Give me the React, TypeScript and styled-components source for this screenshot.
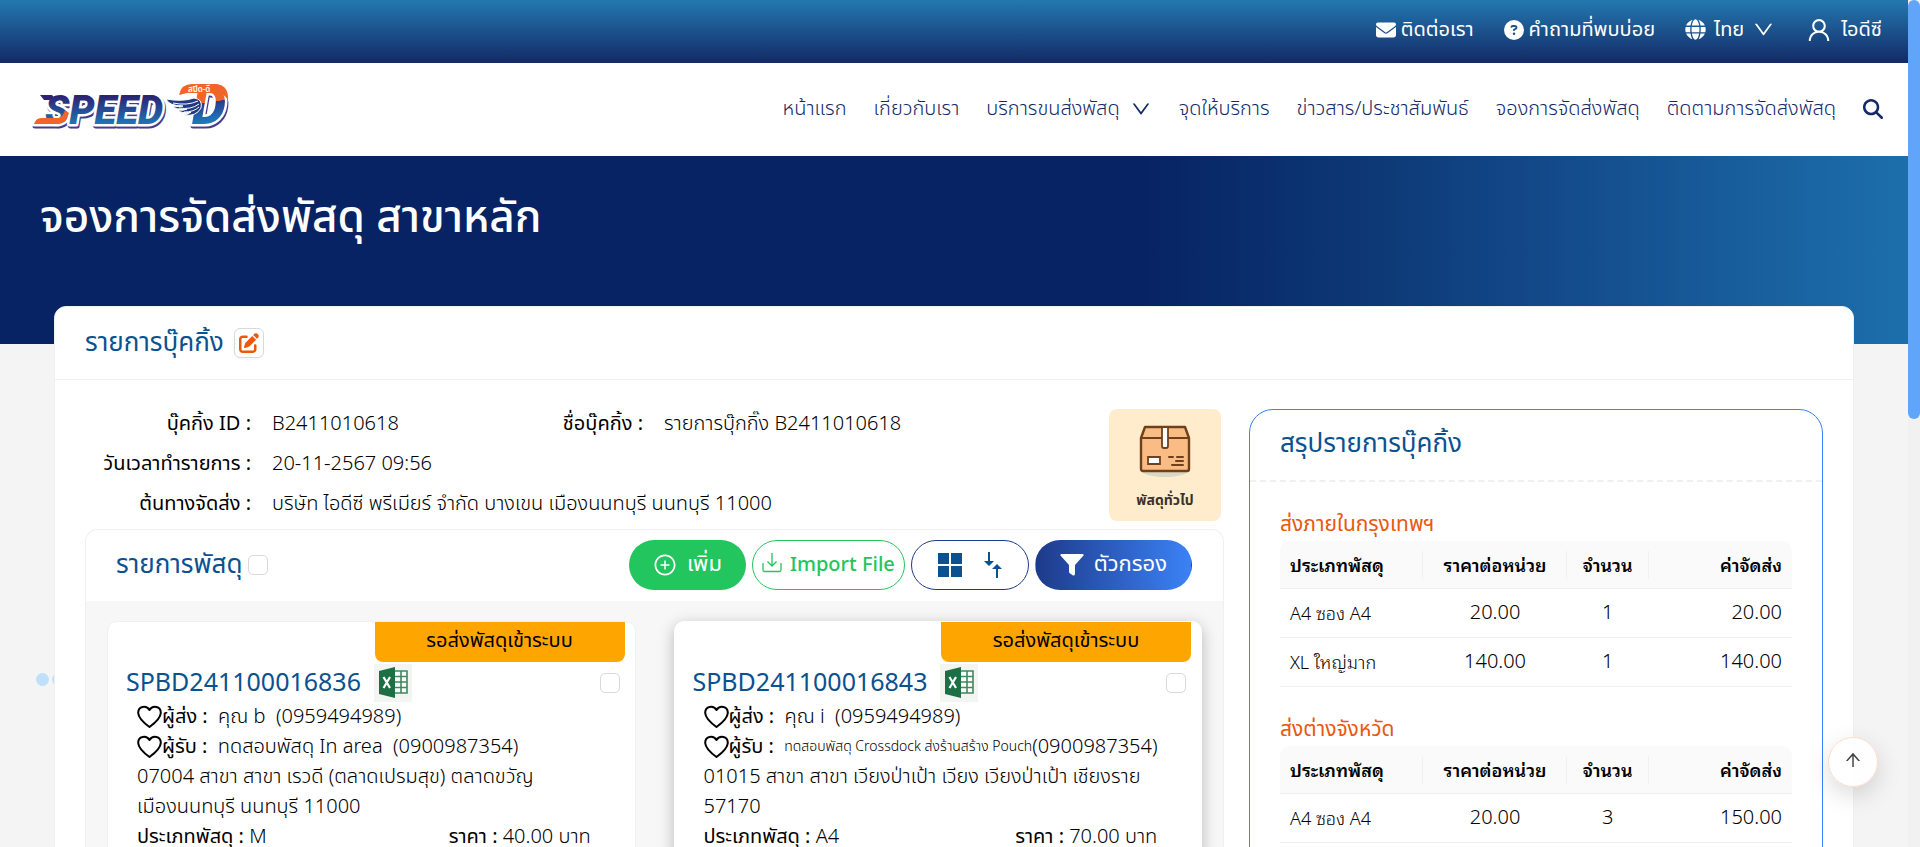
import React from "react";
import styled, { createGlobalStyle, css } from "styled-components";
import { FaEnvelope, FaCircleQuestion, FaMagnifyingGlass, FaPenToSquare } from "react-icons/fa6";
import { FaGlobe } from "react-icons/fa";
import { AiOutlineUser, AiOutlineDown, AiOutlinePlusCircle, AiOutlineArrowUp } from "react-icons/ai";

const thai = `"Noto Sans Thai", "Noto Sans", sans-serif`;
const looped = `"Noto Sans", "Noto Sans Thai Looped", sans-serif`;

const Global = createGlobalStyle`
  * { box-sizing: border-box; }
  body { margin: 0; background: #f4f4f4; color: #000; font: 300 20px/30px ${thai}; }
  h1, h2, h3, p, dl, dd, ul { margin: 0; padding: 0; }
  button { font: inherit; color: inherit; cursor: pointer; }
  a { color: inherit; text-decoration: none; }
  svg { display: block; flex: none; }
`;

const Shell = styled.div`
  display: grid;
  grid-template-columns: minmax(0, 1fr) 12px;
  height: 100vh;
  overflow: hidden;
`;
const Page = styled.div`
  min-width: 0;
`;
const ScrollTrack = styled.div`
  background: #f1f1f1;
  height: 100vh;
`;
const ScrollThumb = styled.div`
  height: 49.5%;
  border-radius: 6px;
  background: #60a5fa;
`;

const TopBar = styled.div`
  display: flex;
  justify-content: flex-end;
  align-items: center;
  gap: 30px;
  height: 63px;
  padding: 0 26px 4px;
  color: #fff;
  font-weight: 400;
  background: linear-gradient(#2478b0, #132a66);
`;
const TopLink = styled.a<{ $gap?: number }>`
  display: flex;
  align-items: center;
  gap: ${(p) => p.$gap ?? 5}px;
`;
const TopButton = styled.button`
  display: flex;
  align-items: center;
  gap: 8px;
  padding: 0;
  border: 0;
  background: none;
`;

const NavBar = styled.header`
  display: flex;
  align-items: center;
  justify-content: space-between;
  height: 93px;
  padding: 0 25px 2px 30px;
  background: #fff;
  color: #132a66;
`;
const Menu = styled.nav`
  display: flex;
  align-items: center;
  gap: 27px;
`;
const MenuLink = styled.a`
  display: flex;
  align-items: center;
  gap: 10px;
`;
const IconButton = styled.button`
  padding: 0;
  border: 0;
  background: none;
`;

const Banner = styled.section`
  height: 188px;
  padding: 30px 40px;
  color: #fff;
  background: linear-gradient(90deg, #072363 60%, #0d3976 72%, #13498a 81%, #1c6fab);
`;
const BannerTitle = styled.h1`
  font-size: 44px;
  line-height: 66px;
  font-weight: 500;
`;

const Main = styled.main`
  padding: 0 54px;
  margin-top: -38px;
`;
const Panel = styled.section`
  border: 1px solid #f0f0f0;
  border-radius: 12px;
  background: #fff;
`;
const PanelHead = styled.div`
  display: flex;
  align-items: center;
  gap: 10px;
  height: 73px;
  padding: 0 30px;
  border-bottom: 1px solid #f0f0f0;
`;
const Heading = styled.h2`
  font-size: 26px;
  line-height: 36px;
  font-weight: 400;
  color: #0a5190;
`;
const ParcelCode = styled(Heading).attrs({ as: "h3" })`
  font-size: 25px;
`;
const EditButton = styled.button`
  display: grid;
  place-items: center;
  width: 30px;
  height: 30px;
  padding: 0;
  border: 1px solid #d9d9d9;
  border-radius: 6px;
  background: #fff;
  color: #ea580c;
  box-shadow: 0 2px 0 #00000005;
`;
const PanelBody = styled.div`
  display: grid;
  grid-template-columns: minmax(0, 1fr) 574px;
  gap: 25px;
  padding: 29px 30px 60px;
`;

const Overview = styled.div`
  display: flex;
  justify-content: space-between;
  padding-right: 3px;
`;
const Details = styled.dl`
  display: grid;
  grid-template-columns: 166px 206px 144px 1fr;
  grid-auto-rows: 40px;
  column-gap: 21px;
  align-content: start;
  line-height: 30px;
`;
const Term = styled.dt`
  text-align: right;
  font-weight: 400;
  white-space: nowrap;
`;
const Value = styled.dd<{ $wide?: boolean }>`
  white-space: nowrap;
  ${(p) => p.$wide && css`grid-column: span 3;`}
`;
const ParcelType = styled.figure`
  display: flex;
  flex-direction: column;
  align-items: center;
  justify-content: space-between;
  width: 112px;
  height: 112px;
  margin: 0;
  padding: 16px 0 8px;
  border-radius: 8px;
  background: #ffeccc;
  color: #3b322c;
  font-size: 14px;
  line-height: 24px;
  font-weight: 700;
`;

const ListCard = styled.section`
  border: 1px solid #f0f0f0;
  border-radius: 12px;
  background: #f7f7f7;
`;
const ListHead = styled.div`
  display: flex;
  align-items: center;
  justify-content: space-between;
  height: 71px;
  padding: 0 31px 2px 30px;
  border-radius: 12px 12px 0 0;
  background: #fff;
`;
const Titled = styled.div`
  display: flex;
  align-items: center;
  gap: 5px;
`;
const Check = styled.input`
  appearance: none;
  width: 20px;
  height: 20px;
  margin: 0;
  border: 1px solid #d9d9d9;
  border-radius: 5px;
  background: #fff;
`;
const Actions = styled.div`
  display: flex;
  gap: 6px;
`;
const Pill = styled.button<{ $kind: "add" | "import" | "view" | "filter" }>`
  display: flex;
  align-items: center;
  justify-content: center;
  gap: 10px;
  height: 50px;
  padding: 0 24px;
  border: 1px solid transparent;
  border-radius: 25px;
  background: #fff;
  font-weight: 400;
  ${(p) => p.$kind === "add" && css`font-size: 22px; padding: 0 23px; background: #22c55e; color: #fff;`}
  ${(p) => p.$kind === "import" && css`padding: 0 9px; gap: 8px; border-color: #22c55e; color: #22c55e; font-weight: 500;`}
  ${(p) => p.$kind === "view" && css`padding: 0 26px; gap: 22px; border-color: #1e3a8a; color: #0a5190;`}
  ${(p) => p.$kind === "filter" && css`font-size: 22px; background: linear-gradient(90deg, #1e3a8a, #3b82f6); color: #fff;`}
`;

const Parcels = styled.div`
  display: grid;
  grid-template-columns: repeat(2, minmax(0, 1fr));
  gap: 38px;
  padding: 20px 21px 40px;
`;
const Parcel = styled.article<{ $raised?: boolean }>`
  padding: 0 10px 40px 18px;
  border: 1px solid #f0f0f0;
  border-radius: 10px;
  background: #fff;
  ${(p) => p.$raised && css`border-color: #fff; box-shadow: 0 4px 16px #00000040;`}
`;
const Status = styled.div`
  width: 250px;
  height: 40px;
  margin-left: auto;
  border-radius: 0 0 8px 8px;
  background: #ffa500;
  font-weight: 400;
  line-height: 38px;
  text-align: center;
`;
const ParcelHead = styled.div`
  display: flex;
  align-items: center;
  height: 38px;
  margin: 2px 5px 0 0;
  gap: 13px;
`;
const PushedCheck = styled(Check)`
  margin-left: auto;
`;
const ParcelRows = styled.div`
  padding: 0 20px 0 11px;
`;
const Row = styled.p`
  display: flex;
  align-items: center;
  white-space: pre;
`;
const Address = styled.p`
  min-height: 60px;
`;
const Label = styled.span`
  font-weight: 400;
`;
const Small = styled.span`
  font-size: 14px;
`;
const Facts = styled.div`
  display: grid;
  grid-template-columns: 2fr 1fr;
`;

const Summary = styled.aside`
  border: 1px solid #3b82f6;
  border-radius: 24px;
  background: #fff;
`;
const SummaryHead = styled.div`
  height: 72px;
  padding: 16px 30px;
  border-bottom: 2px dashed #f0f0f0;
`;
const SummaryBody = styled.div`
  display: grid;
  gap: 28px;
  padding: 28px 30px;
`;
const Zone = styled.h3`
  font-size: 21px;
  line-height: 30px;
  font-weight: 400;
  color: #ea580c;
`;
const Table = styled.table`
  width: 100%;
  margin-top: 1px;
  table-layout: fixed;
  border-collapse: separate;
  border-spacing: 0;
`;
const Th = styled.th<{ $align?: string; $width?: string }>`
  position: relative;
  width: ${(p) => p.$width ?? "28%"};
  height: 48px;
  padding: 0 10px;
  border-bottom: 1px solid #f0f0f0;
  background: #fafafa;
  font: 600 18px/30px ${looped};
  white-space: nowrap;
  text-align: ${(p) => p.$align ?? "center"};
  &:first-child { border-top-left-radius: 10px; }
  &:last-child { border-top-right-radius: 10px; }
  &:not(:last-child)::after {
    content: "";
    position: absolute;
    top: 10px;
    right: 0;
    width: 1px;
    height: 28px;
    background: #f0f0f0;
  }
`;
const Td = styled.td<{ $align?: string; $name?: boolean }>`
  height: 49px;
  padding: 0 10px;
  border-bottom: 1px solid #f0f0f0;
  text-align: ${(p) => p.$align ?? "center"};
  ${(p) => p.$name && css`font-family: ${looped}; font-size: 18px;`}
`;

const ToTop = styled.button`
  position: fixed;
  right: 42px;
  bottom: 60px;
  display: grid;
  place-items: center;
  width: 50px;
  height: 50px;
  padding: 0 0 4px;
  border: 1px solid #fbdccb;
  border-radius: 50%;
  background: #ffffffe6;
  color: #444;
  box-shadow: 0 8px 24px #00000026;
`;
const Dots = styled.div`
  position: fixed;
  left: 36px;
  top: 673px;
  display: flex;
  gap: 3px;
  width: 18px;
  overflow: hidden;
`;
const Dot = styled.span`
  flex: none;
  width: 13px;
  height: 13px;
  border-radius: 50%;
  background: #bfdffb;
`;

const Logo = () => (
  <svg width="206" height="54" viewBox="0 0 206 54" role="img" aria-label="Speed-D">
    <defs>
      <linearGradient id="ink" x1="0" y1="0" x2="0" y2="1">
        <stop offset="0.2" stopColor="#2c2473" />
        <stop offset="0.8" stopColor="#1f77b8" />
      </linearGradient>
      <linearGradient id="dee" gradientUnits="userSpaceOnUse" x1="176" y1="3" x2="182" y2="42">
        <stop offset="0.44" stopColor="#f2652a" />
        <stop offset="0.45" stopColor="#2b3b8c" />
        <stop offset="1" stopColor="#1b82c4" />
      </linearGradient>
    </defs>
    <g fontFamily="Roboto, sans-serif" fontStyle="italic" fontWeight="900" strokeLinejoin="round">
      <g fill="#453b8c" stroke="#453b8c" strokeWidth="5" transform="translate(1 2)">
        <text x="15" y="42" fontSize="40">SPEED</text>
        <text x="162" y="42" fontSize="54">D</text>
        <path d="M4 42 L10 37 H34 Q31 42 22 42 Z" />
      </g>
      <g fill="#fff" stroke="#fff" strokeWidth="5">
        <text x="15" y="42" fontSize="40">SPEED</text>
        <text x="162" y="42" fontSize="54">D</text>
        <path d="M4 42 L10 37 H34 Q31 42 22 42 Z" />
      </g>
      <path d="M10 13 L22 13 L26 18 L14 18 Z" fill="#2c2473" />
      <text x="15" y="42" fontSize="40" fill="url(#ink)">SPEED</text>
      <text x="162" y="42" fontSize="54" fill="url(#dee)">D</text>
    </g>
    <path d="M4 42 Q6 36 11 36 H28 Q33 35 35 28 L39 31 Q36 42 27 42 Z" fill="#f2652a" />
    <path d="M149 13 Q151 2 162 2 H187 Q199 4 198 18 Q194 11 186 11 H157 Z" fill="#f2652a" />
    <text x="158" y="10" fontSize="8" fontWeight="600" fill="#fff">สปีด-ดี</text>
    <path d="M136 17 Q153 20 164 16 Q173 17 171 26 Q166 35 154 33 Q159 32 161 30 Q151 32 148 28 Q154 29 157 27 Q145 28 143 24 Q149 25 153 24 Q139 24 136 17 Z" fill="#233a82" stroke="#fff" strokeWidth="1" />
    <path d="M143 21 Q157 24 168 19 M149 26 Q161 28 169 22 M154 30 Q164 30 169 25" fill="none" stroke="#fff" strokeWidth="1" />
  </svg>
);

const Box = () => (
  <svg width="54" height="52" viewBox="0 0 54 52" aria-hidden="true">
    <ellipse cx="27" cy="45" rx="24" ry="7" fill="#d9d8c4" />
    <path d="M7 2 H47 L51 13 V44 Q51 46 49 46 H5 Q3 46 3 44 V13 Z" fill="#f8bc84" stroke="#71401b" strokeWidth="2.400" strokeLinejoin="round" />
    <path d="M3 13 H51" stroke="#71401b" strokeWidth="2.200" />
    <path d="M24 2 H30 V21 Q30 23 28 23 H26 Q24 23 24 21 Z" fill="#fff" stroke="#71401b" strokeWidth="1.800" />
    <path d="M10 32 H22 V39 H10 Z" fill="#fff" stroke="#71401b" strokeWidth="1.800" />
    <path d="M31 32 H35 M39 32 H45 M38 36 H45 M34 40 H45" stroke="#71401b" strokeWidth="2" strokeLinecap="round" />
  </svg>
);

const Excel = () => (
  <svg width="38" height="38" viewBox="0 0 38 38" aria-label="Excel" role="img">
    <path d="M0 0 H38 V38 H0 Z" fill="#f3f5f2" />
    <path d="M20 7 H33 V29 H20 Z" fill="#fff" stroke="#3c8a5e" strokeWidth="1.600" />
    <path d="M20 12.500 H33 M20 18 H33 M20 23.500 H33 M27 7 V29" stroke="#3c8a5e" strokeWidth="1.600" />
    <path d="M5 7 L21 3 V34 L5 30 Z" fill="#1c7044" />
    <path d="M9.500 13 L16 24 M16 13 L9.500 24" stroke="#fff" strokeWidth="2.200" />
  </svg>
);

const Heart = () => (
  <svg width="25" height="24" viewBox="0 0 25 24" fill="none" stroke="currentColor" strokeWidth="2" strokeLinejoin="round" aria-hidden="true">
    <path d="M12.500 22 Q1.500 14 1.200 8 C1 1 9.500 0 12.500 5 C15.500 0 24 1 23.800 8 Q23.500 14 12.500 22 Z" />
  </svg>
);
const ImportIcon = () => (
  <svg width="20" height="24" viewBox="0 0 20 24" fill="none" stroke="currentColor" strokeWidth="1.300">
    <path d="M1 10 V17 Q1 18.500 2.500 18.500 H17.500 Q19 18.500 19 17 V10 M10 0 V13 M5.500 8.500 L10 13 L14.500 8.500" />
  </svg>
);
const GridIcon = () => (
  <svg width="24" height="24" viewBox="0 0 24 24" fill="currentColor">
    <path d="M0 0 H11 V11 H0 Z M13 0 H24 V11 H13 Z M0 13 H11 V24 H0 Z M13 13 H24 V24 H13 Z" />
  </svg>
);
const SortIcon = () => (
  <svg width="18" height="26" viewBox="0 0 18 26" fill="currentColor">
    <path d="M4 0 H6 V9 H10 L5 14 L0 9 H4 Z M12 26 H14 V17 H18 L13 12 L8 17 H12 Z" />
  </svg>
);
const FilterIcon = () => (
  <svg width="24" height="22" viewBox="0 0 24 22" fill="currentColor">
    <path d="M1 0 H23 Q24 0.500 23.500 1.500 L15 11 V20 Q14.500 22 13 21.500 L9.500 19 Q9 18.500 9 18 V11 L0.500 1.500 Q0 0.500 1 0 Z" />
  </svg>
);

interface ParcelData {
  id: string;
  sender: string;
  senderPhone: string;
  receiver: React.ReactNode;
  receiverPhone: string;
  address: string;
  type: string;
  price: string;
  raised?: boolean;
}

const parcels: ParcelData[] = [
  {
    id: "SPBD241100016836",
    sender: "คุณ b  ",
    senderPhone: "(0959494989)",
    receiver: "ทดสอบพัสดุ In area  ",
    receiverPhone: "(0900987354)",
    address: "07004 สาขา สาขา เรวดี (ตลาดเปรมสุข) ตลาดขวัญ เมืองนนทบุรี นนทบุรี 11000",
    type: "M",
    price: "40.00",
  },
  {
    id: "SPBD241100016843",
    sender: "คุณ i  ",
    senderPhone: "(0959494989)",
    receiver: <Small>ทดสอบพัสดุ Crossdock ส่งร้านสร้าง Pouch</Small>,
    receiverPhone: "(0900987354)",
    address: "01015 สาขา สาขา เวียงป่าเป้า เวียง เวียงป่าเป้า เชียงราย 57170",
    type: "A4",
    price: "70.00",
    raised: true,
  },
];

const zones = [
  { name: "ส่งภายในกรุงเทพฯ", rows: [["A4 ซอง A4", "20.00", "1", "20.00"], ["XL ใหญ่มาก", "140.00", "1", "140.00"]] },
  { name: "ส่งต่างจังหวัด", rows: [["A4 ซอง A4", "20.00", "3", "150.00"]] },
];

const ParcelCard = ({ p }: { p: ParcelData }) => (
  <Parcel $raised={p.raised}>
    <Status>รอส่งพัสดุเข้าระบบ</Status>
    <ParcelHead>
      <ParcelCode>{p.id}</ParcelCode>
      <Excel />
      <PushedCheck type="checkbox" aria-label={p.id} />
    </ParcelHead>
    <ParcelRows>
      <Row><Heart /><Label>ผู้ส่ง :  </Label>{p.sender}{p.senderPhone}</Row>
      <Row><Heart /><Label>ผู้รับ :  </Label>{p.receiver}{p.receiverPhone}</Row>
      <Address>{p.address}</Address>
      <Facts>
        <span><Label>ประเภทพัสดุ :</Label> {p.type}</span>
        <span><Label>ราคา :</Label> {p.price} บาท</span>
      </Facts>
    </ParcelRows>
  </Parcel>
);

export default function App() {
  return (
    <Shell>
      <Global />
      <Page>
        <TopBar>
          <TopLink href="#contact"><FaEnvelope size={20} />ติดต่อเรา</TopLink>
          <TopLink href="#faq"><FaCircleQuestion size={20} />คำถามที่พบบ่อย</TopLink>
          <TopButton type="button"><FaGlobe size={21} />ไทย<AiOutlineDown size={23} /></TopButton>
          <TopLink href="#account" $gap={8}><AiOutlineUser size={28} />ไอดีซี</TopLink>
        </TopBar>
        <NavBar>
          <a href="#home"><Logo /></a>
          <Menu>
            <MenuLink href="#home">หน้าแรก</MenuLink>
            <MenuLink href="#about">เกี่ยวกับเรา</MenuLink>
            <MenuLink href="#services">บริการขนส่งพัสดุ<AiOutlineDown size={22} /></MenuLink>
            <MenuLink href="#points">จุดให้บริการ</MenuLink>
            <MenuLink href="#news">ข่าวสาร/ประชาสัมพันธ์</MenuLink>
            <MenuLink href="#booking">จองการจัดส่งพัสดุ</MenuLink>
            <MenuLink href="#tracking">ติดตามการจัดส่งพัสดุ</MenuLink>
            <IconButton type="button" aria-label="ค้นหา"><FaMagnifyingGlass size={20} /></IconButton>
          </Menu>
        </NavBar>
        <Banner><BannerTitle>จองการจัดส่งพัสดุ สาขาหลัก</BannerTitle></Banner>
        <Main>
          <Panel>
            <PanelHead>
              <Heading>รายการบุ๊คกิ้ง</Heading>
              <EditButton type="button" aria-label="แก้ไข"><FaPenToSquare size={20} /></EditButton>
            </PanelHead>
            <PanelBody>
              <div>
                <Overview>
                  <Details>
                    <Term>บุ๊คกิ้ง ID :</Term><Value>B2411010618</Value>
                    <Term>ชื่อบุ๊คกิ้ง :</Term><Value>รายการบุ๊กกิ๊ง B2411010618</Value>
                    <Term>วันเวลาทำรายการ :</Term><Value $wide>20-11-2567 09:56</Value>
                    <Term>ต้นทางจัดส่ง :</Term><Value $wide>บริษัท ไอดีซี พรีเมียร์ จำกัด บางเขน เมืองนนทบุรี นนทบุรี 11000</Value>
                  </Details>
                  <ParcelType><Box /><figcaption>พัสดุทั่วไป</figcaption></ParcelType>
                </Overview>
                <ListCard>
                  <ListHead>
                    <Titled>
                      <Heading>รายการพัสดุ</Heading>
                      <Check type="checkbox" aria-label="รายการพัสดุ" />
                    </Titled>
                    <Actions>
                      <Pill type="button" $kind="add"><AiOutlinePlusCircle size={24} />เพิ่ม</Pill>
                      <Pill type="button" $kind="import"><ImportIcon />Import File</Pill>
                      <Pill type="button" $kind="view" aria-label="มุมมอง"><GridIcon /><SortIcon /></Pill>
                      <Pill type="button" $kind="filter"><FilterIcon />ตัวกรอง</Pill>
                    </Actions>
                  </ListHead>
                  <Parcels>{parcels.map((p) => <ParcelCard key={p.id} p={p} />)}</Parcels>
                </ListCard>
              </div>
              <Summary>
                <SummaryHead><Heading>สรุปรายการบุ๊คกิ้ง</Heading></SummaryHead>
                <SummaryBody>
                  {zones.map((z) => (
                    <section key={z.name}>
                      <Zone>{z.name}</Zone>
                      <Table>
                        <thead>
                          <tr>
                            <Th $align="left">ประเภทพัสดุ</Th>
                            <Th>ราคาต่อหน่วย</Th>
                            <Th $width="16%">จำนวน</Th>
                            <Th $align="right">ค่าจัดส่ง</Th>
                          </tr>
                        </thead>
                        <tbody>
                          {z.rows.map(([name, unit, count, total]) => (
                            <tr key={name}>
                              <Td $name $align="left">{name}</Td>
                              <Td>{unit}</Td>
                              <Td>{count}</Td>
                              <Td $align="right">{total}</Td>
                            </tr>
                          ))}
                        </tbody>
                      </Table>
                    </section>
                  ))}
                </SummaryBody>
              </Summary>
            </PanelBody>
          </Panel>
        </Main>
        <Dots><Dot /><Dot /></Dots>
        <ToTop type="button" aria-label="กลับขึ้นด้านบน"><AiOutlineArrowUp size={20} /></ToTop>
      </Page>
      <ScrollTrack><ScrollThumb /></ScrollTrack>
    </Shell>
  );
}
